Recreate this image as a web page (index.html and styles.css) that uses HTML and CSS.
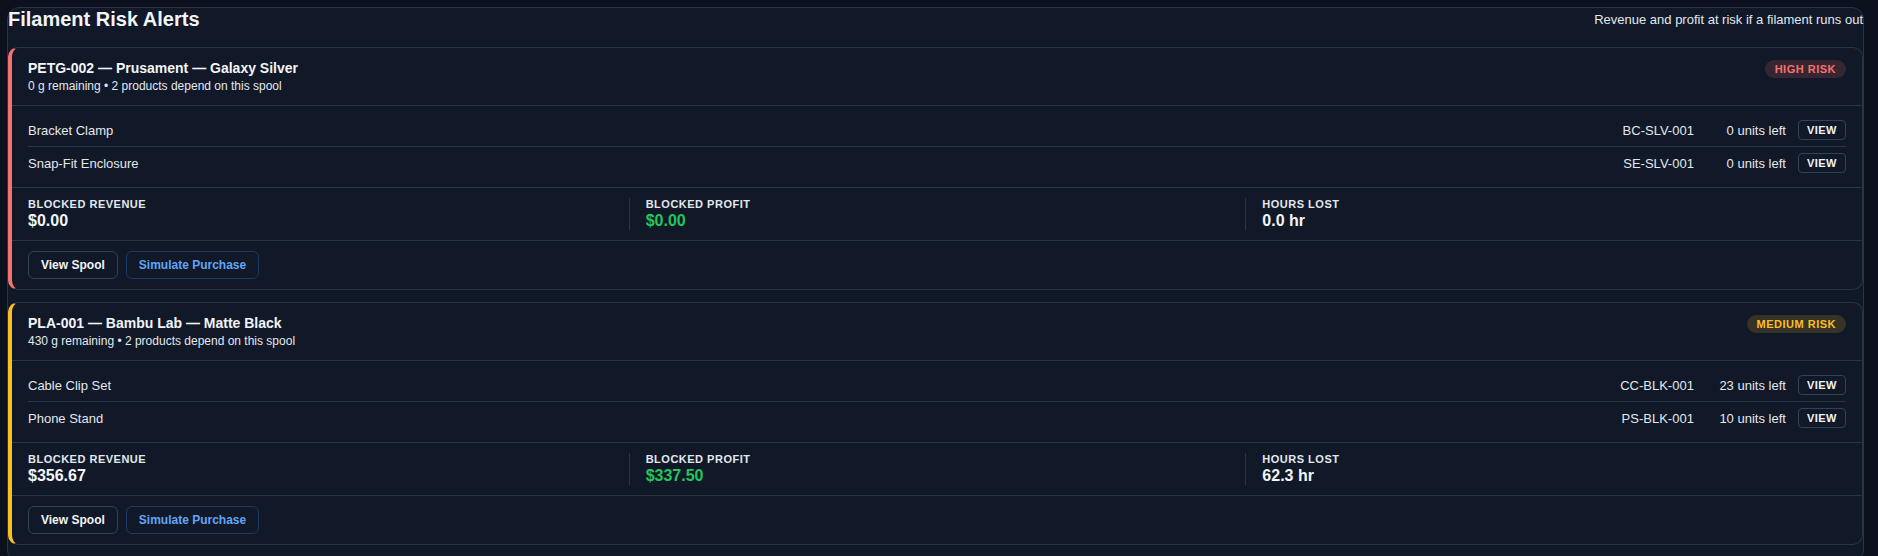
FILE: index.html
```html
<!DOCTYPE html>
<html lang="en">
<head>
    <meta charset="UTF-8">
    <meta name="viewport" content="width=device-width, initial-scale=1.0">
    <title>Filament Risk Alerts</title>
    <link rel="stylesheet" href="styles.css">
</head>
<body>

    <div class="panel">
        <div class="panel-head">
            <h2>Filament Risk Alerts</h2>
            <span class="panel-sub">Revenue and profit at risk if a filament runs out</span>
        </div>

        <div class="alert-list">

            <!-- High risk spool -->
            <div class="alert-card risk-high">
                <div class="alert-head">
                    <div>
                        <div class="alert-title">PETG-002 — Prusament — Galaxy Silver</div>
                        <div class="alert-meta">0 g remaining • 2 products depend on this spool</div>
                    </div>
                    <span class="badge badge-high">HIGH RISK</span>
                </div>

                <div class="products">
                    <div class="product-row">
                        <span class="product-name">Bracket Clamp</span>
                        <span class="product-sku">BC-SLV-001</span>
                        <span class="product-units">0 units left</span>
                        <button class="view-btn">VIEW</button>
                    </div>
                    <div class="product-row">
                        <span class="product-name">Snap-Fit Enclosure</span>
                        <span class="product-sku">SE-SLV-001</span>
                        <span class="product-units">0 units left</span>
                        <button class="view-btn">VIEW</button>
                    </div>
                </div>

                <div class="stats">
                    <div class="stat">
                        <div class="stat-label">Blocked Revenue</div>
                        <div class="stat-value">$0.00</div>
                    </div>
                    <div class="stat">
                        <div class="stat-label">Blocked Profit</div>
                        <div class="stat-value profit">$0.00</div>
                    </div>
                    <div class="stat">
                        <div class="stat-label">Hours Lost</div>
                        <div class="stat-value">0.0 hr</div>
                    </div>
                </div>

                <div class="actions">
                    <button class="btn">View Spool</button>
                    <button class="btn btn-blue">Simulate Purchase</button>
                </div>
            </div>

            <!-- Medium risk spool -->
            <div class="alert-card risk-medium">
                <div class="alert-head">
                    <div>
                        <div class="alert-title">PLA-001 — Bambu Lab — Matte Black</div>
                        <div class="alert-meta">430 g remaining • 2 products depend on this spool</div>
                    </div>
                    <span class="badge badge-medium">MEDIUM RISK</span>
                </div>

                <div class="products">
                    <div class="product-row">
                        <span class="product-name">Cable Clip Set</span>
                        <span class="product-sku">CC-BLK-001</span>
                        <span class="product-units">23 units left</span>
                        <button class="view-btn">VIEW</button>
                    </div>
                    <div class="product-row">
                        <span class="product-name">Phone Stand</span>
                        <span class="product-sku">PS-BLK-001</span>
                        <span class="product-units">10 units left</span>
                        <button class="view-btn">VIEW</button>
                    </div>
                </div>

                <div class="stats">
                    <div class="stat">
                        <div class="stat-label">Blocked Revenue</div>
                        <div class="stat-value">$356.67</div>
                    </div>
                    <div class="stat">
                        <div class="stat-label">Blocked Profit</div>
                        <div class="stat-value profit">$337.50</div>
                    </div>
                    <div class="stat">
                        <div class="stat-label">Hours Lost</div>
                        <div class="stat-value">62.3 hr</div>
                    </div>
                </div>

                <div class="actions">
                    <button class="btn">View Spool</button>
                    <button class="btn btn-blue">Simulate Purchase</button>
                </div>
            </div>

        </div>
    </div>

</body>
</html>
```

FILE: styles.css
```css
body {
    margin: 0;
    padding: 7px 14px 0 7px;
    background-color: #0c111d;
    color: #e5e7eb;
    font-family: "Liberation Sans", Arial, sans-serif;
}

.panel {
    background-color: #111827;
    border: 1px solid #2a3445;
    border-radius: 12px;
    padding-bottom: 16px;
}

.panel-head {
    display: flex;
    justify-content: space-between;
    align-items: center;
    margin-bottom: 16px;
}

.panel-head h2 {
    margin: 0;
    font-size: 20px;
    line-height: 23px;
    font-weight: bold;
    color: #f1f5f9;
}

.panel-sub {
    font-size: 13px;
    color: #e2e8f0;
}

.alert-list {
    display: flex;
    flex-direction: column;
    gap: 12px;
}

.alert-card {
    background-color: #111827;
    border: 1px solid #2a3445;
    border-radius: 10px;
}

.risk-high {
    border-left: 4px solid #f87171;
}

.risk-medium {
    border-left: 4px solid #fbbf24;
}

.alert-head {
    display: flex;
    justify-content: space-between;
    align-items: flex-start;
    padding: 12px 16px;
    border-bottom: 1px solid #2a3445;
}

.alert-title {
    font-size: 14px;
    line-height: 17px;
    font-weight: bold;
    color: #f1f5f9;
}

.alert-meta {
    margin-top: 2px;
    font-size: 12px;
    line-height: 14px;
    color: #e2e8f0;
}

.badge {
    display: inline-block;
    padding: 3px 10px;
    border-radius: 999px;
    font-size: 11px;
    line-height: 12px;
    font-weight: bold;
    letter-spacing: 0.5px;
}

.badge-high {
    background-color: rgba(248, 113, 113, 0.16);
    color: #f87171;
}

.badge-medium {
    background-color: rgba(251, 191, 36, 0.16);
    color: #fbbf24;
}

.products {
    padding: 8px 16px;
    border-bottom: 1px solid #2a3445;
}

.product-row {
    display: flex;
    align-items: center;
    gap: 12px;
    padding: 6px 0;
    font-size: 13px;
}

.product-row + .product-row {
    border-top: 1px solid #2a3445;
}

.product-name {
    flex: 1;
    color: #e5e7eb;
}

.product-sku {
    color: #e2e8f0;
    text-align: right;
}

.product-units {
    min-width: 80px;
    text-align: right;
    color: #e2e8f0;
}

.view-btn {
    height: 20px;
    padding: 0 8px;
    background: transparent;
    border: 1px solid #334155;
    border-radius: 4px;
    color: #f1f5f9;
    font-family: inherit;
    font-size: 11px;
    font-weight: bold;
    letter-spacing: 0.5px;
    cursor: pointer;
}

.stats {
    display: grid;
    grid-template-columns: repeat(3, 1fr);
    padding: 10px 0;
    border-bottom: 1px solid #2a3445;
}

.stat {
    padding: 0 16px;
}

.stat + .stat {
    border-left: 1px solid #2a3445;
}

.stat-label {
    font-size: 11px;
    line-height: 13px;
    font-weight: bold;
    letter-spacing: 0.5px;
    text-transform: uppercase;
    color: #e2e8f0;
}

.stat-value {
    font-size: 16px;
    line-height: 19px;
    font-weight: bold;
    color: #f1f5f9;
}

.stat-value.profit {
    color: #22c55e;
}

.actions {
    display: flex;
    gap: 8px;
    padding: 10px 16px;
}

.btn {
    height: 28px;
    padding: 0 12px;
    background: transparent;
    border: 1px solid #334155;
    border-radius: 6px;
    color: #f1f5f9;
    font-family: inherit;
    font-size: 12px;
    font-weight: bold;
    cursor: pointer;
}

.btn-blue {
    color: #60a5fa;
    border-color: #1e3a5f;
}
```
